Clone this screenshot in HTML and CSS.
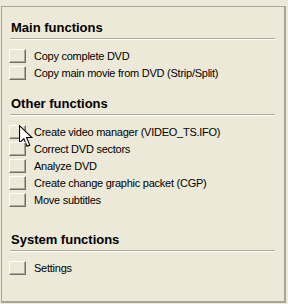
FILE: index.html
```html
<!DOCTYPE html>
<html lang="en">
<head>
  <meta charset="UTF-8" />
  <title>DVD functions</title>
  <link rel="stylesheet" href="styles.css">
</head>
<body>
  <div class="panel">

    <!-- MAIN FUNCTIONS -->
    <section class="group group-main">
      <h2>Main functions</h2>
      <ul class="actions">
        <li><span class="btn"></span>Copy complete DVD</li>
        <li><span class="btn"></span>Copy main movie from DVD (Strip/Split)</li>
      </ul>
    </section>

    <!-- OTHER FUNCTIONS -->
    <section class="group group-other">
      <h2>Other functions</h2>
      <ul class="actions">
        <li><span class="btn"></span>Create video manager (VIDEO_TS.IFO)
          <svg class="cursor" width="14" height="23" viewBox="0 0 13 21">
            <path d="M0.5 0.5 L0.5 16.5 L4.5 12.5 L7.5 19.5 L10 18.5 L7 11.5 L12 11.5 Z" fill="#fff" stroke="#000" stroke-width="1" />
          </svg>
        </li>
        <li><span class="btn"></span>Correct DVD sectors</li>
        <li><span class="btn"></span>Analyze DVD</li>
        <li><span class="btn"></span>Create change graphic packet (CGP)</li>
        <li><span class="btn"></span>Move subtitles</li>
      </ul>
    </section>

    <!-- SYSTEM FUNCTIONS -->
    <section class="group group-system">
      <h2>System functions</h2>
      <ul class="actions">
        <li><span class="btn"></span>Settings</li>
      </ul>
    </section>

  </div>
</body>
</html>
```

FILE: styles.css
```css
/* XP-ish task panel */
:root {
  --face: #ece9d8;
  --frame: #a7a596;
  --shadow: #aca899;
  --dark: #716f64;
}

*, *::before, *::after { box-sizing: border-box; margin: 0; padding: 0; }
body {
  background: var(--face);
  font-family: "Liberation Sans", Arial, sans-serif;
  color: #000;
  padding: 6px 2px 1px 1px;
}

.panel {
  height: 297px;
  border: 1px solid var(--frame);
  border-right-width: 2px;
  border-bottom-width: 2px;
  padding: 0 9px 0 8px;
}

/* GROUPS */
.group h2 {
  font-size: 13px;
  font-weight: 700;
  line-height: 16px;
  padding-left: 1px;
  padding-bottom: 2px;
  border-bottom: 1px solid var(--shadow);
  box-shadow: 0 1px 0 #fff;
}
.group-main { padding-top: 13px; }
.group-other { padding-top: 15px; }
.group-system { padding-top: 24px; }

.actions {
  list-style: none;
  margin: 8px 0 0 -2px;
}
.actions li {
  position: relative;
  display: flex;
  align-items: center;
  height: 17px;
  font-size: 11px;
  letter-spacing: -0.25px;
  white-space: nowrap;
}

/* small raised button */
.btn {
  width: 17px;
  height: 14px;
  margin: 0 8px 0 1px;
  background: var(--face);
  border-top: 1px solid #fff;
  border-left: 1px solid #fff;
  border-right: 1px solid var(--dark);
  border-bottom: 1px solid var(--dark);
  box-shadow: inset -1px -1px 0 var(--shadow);
}

/* mouse pointer over the first item */
.cursor {
  position: absolute;
  left: 11px;
  top: 2px;
}
```
